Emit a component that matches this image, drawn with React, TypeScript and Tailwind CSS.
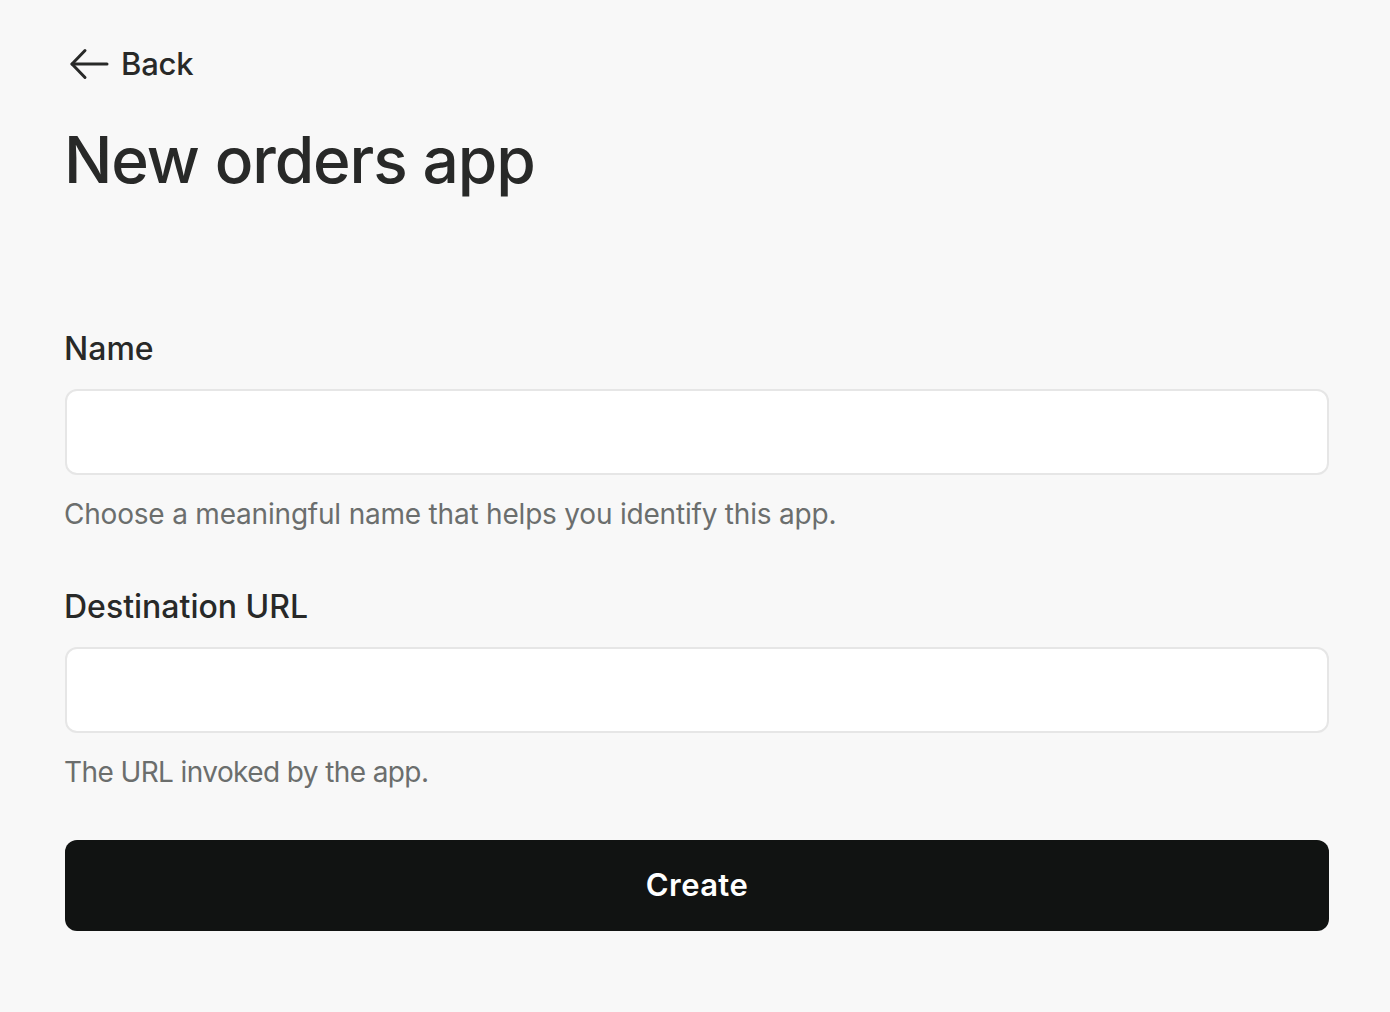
import React from "react";

export default function App() {
  return (
    <div className="min-h-[1012px] w-full bg-[#f8f8f8] pl-[65px] pr-[61px] text-[#282928]" style={{ fontFamily: "Inter, 'Noto Sans', sans-serif" }}>
      <div className="pt-[44px] flex items-center h-[84px] gap-[12px]">
        <svg width="40" height="32" viewBox="0 0 40 32" fill="none" className="ml-[4px]">
          <path d="M3 16H38" stroke="#282928" strokeWidth="3" strokeLinecap="round" />
          <path d="M16 2.5L3 16L16 29.5" stroke="#282928" strokeWidth="3" strokeLinecap="round" strokeLinejoin="round" />
        </svg>
        <span className="text-[31px] leading-[40px] font-medium tracking-[-0.2px]">Back</span>
      </div>
      <h1 className="mt-[36px] text-[64px] leading-[80px] font-medium tracking-[-1.1px] -ml-[1px]">New orders app</h1>

      <div className="mt-[129px] text-[32px] leading-[40px] font-medium tracking-[0px] -ml-[1px]">Name</div>
      <input className="mt-[20px] block w-full h-[86px] rounded-[12px] border-2 border-[#e6e6e6] bg-white outline-none" />
      <div className="mt-[21px] text-[28px] leading-[36px] text-[#6b6e6d] tracking-[-0.2px] -ml-[1px]">Choose a meaningful name that helps you identify this app.</div>

      <div className="mt-[55px] text-[32px] leading-[40px] font-medium tracking-[0px] -ml-[1px]">Destination URL</div>
      <input className="mt-[20px] block w-full h-[86px] rounded-[12px] border-2 border-[#e6e6e6] bg-white outline-none" />
      <div className="mt-[21px] text-[28px] leading-[36px] text-[#6b6e6d] tracking-[-0.6px] -ml-[1px]">The URL invoked by the app.</div>

      <button className="mt-[50px] w-full h-[91px] rounded-[12px] bg-[#111312] text-white text-[31px] font-semibold tracking-[0.4px]">Create</button>
    </div>
  );
}
